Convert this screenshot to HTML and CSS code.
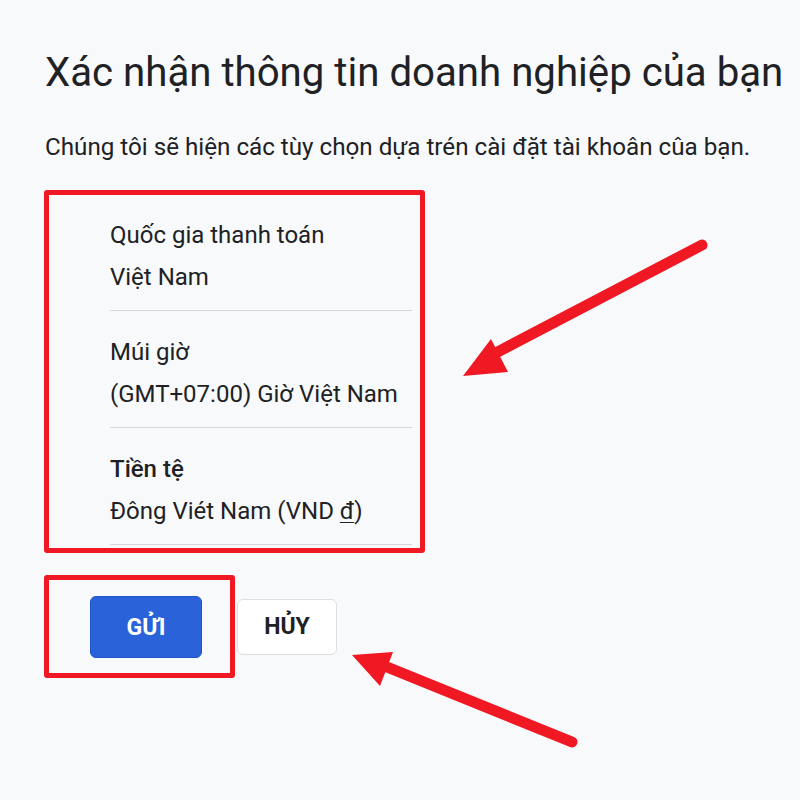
FILE: index.html
```html
<!DOCTYPE html>
<html lang="vi">
<head>
<meta charset="utf-8">
<title>Xác nhận thông tin doanh nghiệp</title>
<link rel="stylesheet" href="styles.css">
</head>
<body>
<main class="page">
  <h1 class="title">Xác nhận thông tin doanh nghiệp của bạn</h1>
  <p class="subtitle">Chúng tôi sẽ hiện các tùy chọn dựa trén cài đặt tài khoân cûa bạn.</p>
  <section class="settings">
    <div class="item">
      <div class="label">Quốc gia thanh toán</div>
      <div class="value">Việt Nam</div>
    </div>
    <div class="item">
      <div class="label">Múi giờ</div>
      <div class="value">(GMT+07:00) Giờ Việt Nam</div>
    </div>
    <div class="item">
      <div class="label strong">Tiền tệ</div>
      <div class="value">Đông Viét Nam (VND <span class="dong">đ</span>)</div>
    </div>
  </section>
  <div class="actions">
    <div class="highlight">
      <button class="btn primary">GỬI</button>
    </div>
    <button class="btn secondary">HỦY</button>
  </div>
  <svg class="arrows" width="800" height="800" viewBox="0 0 800 800">
    <line x1="702" y1="245" x2="488" y2="357" stroke="#f01823" stroke-width="11" stroke-linecap="round"/>
    <polygon points="463,376 491,339 508,372" fill="#f01823"/>
    <line x1="572" y1="742" x2="382" y2="665" stroke="#f01823" stroke-width="11" stroke-linecap="round"/>
    <polygon points="352,655 393,652 380,686" fill="#f01823"/>
  </svg>
</main>
</body>
</html>
```

FILE: styles.css
```css
html, body {
  margin: 0;
  padding: 0;
  background: #f8f9fb;
}

.page {
  position: relative;
  width: 800px;
  height: 800px;
  box-sizing: border-box;
  padding: 50px 0 0 45px;
  font-family: Roboto, "Noto Sans", Arial, sans-serif;
  color: #202124;
  overflow: hidden;
}

.title {
  margin: 0;
  font-size: 40.2px;
  line-height: 46px;
  font-weight: 400;
  white-space: nowrap;
}

.subtitle {
  margin: 36px 0 0;
  font-size: 24.2px;
  line-height: 30px;
  white-space: nowrap;
}

.settings {
  margin-top: 28px;
  margin-left: -1px;
  width: 381px;
  box-sizing: border-box;
  border: 5px solid #f01823;
  border-radius: 3px;
  padding: 0 8px 3px 61px;
}

.item {
  padding: 26px 0 18px;
  border-bottom: 1px solid #d5d7da;
}

.item:first-child {
  padding-top: 25px;
}

.label,
.value {
  font-size: 24px;
  line-height: 30px;
  white-space: nowrap;
}

.value {
  margin-top: 12px;
}

.label.strong {
  font-weight: 500;
}

.dong {
  text-decoration: underline;
  text-underline-offset: 3px;
  text-decoration-thickness: 1px;
}

.actions {
  margin-top: 22px;
  margin-left: -1px;
  display: flex;
  align-items: center;
}

.highlight {
  border: 5px solid #f01823;
  border-radius: 3px;
  padding: 16px 28px 15px 41px;
}

.btn {
  font-family: Roboto, "Noto Sans", Arial, sans-serif;
  font-size: 23px;
  font-weight: 700;
  border-radius: 6px;
  cursor: pointer;
}

.primary {
  width: 112px;
  height: 62px;
  background: #2a62d9;
  color: #ffffff;
  border: 1px solid #1f55c8;
  display: block;
}

.secondary {
  margin-left: 2px;
  width: 100px;
  height: 56px;
  background: #ffffff;
  color: #202124;
  border: 1px solid #dcdee1;
}

.arrows {
  position: absolute;
  left: 0;
  top: 0;
  pointer-events: none;
}
```
